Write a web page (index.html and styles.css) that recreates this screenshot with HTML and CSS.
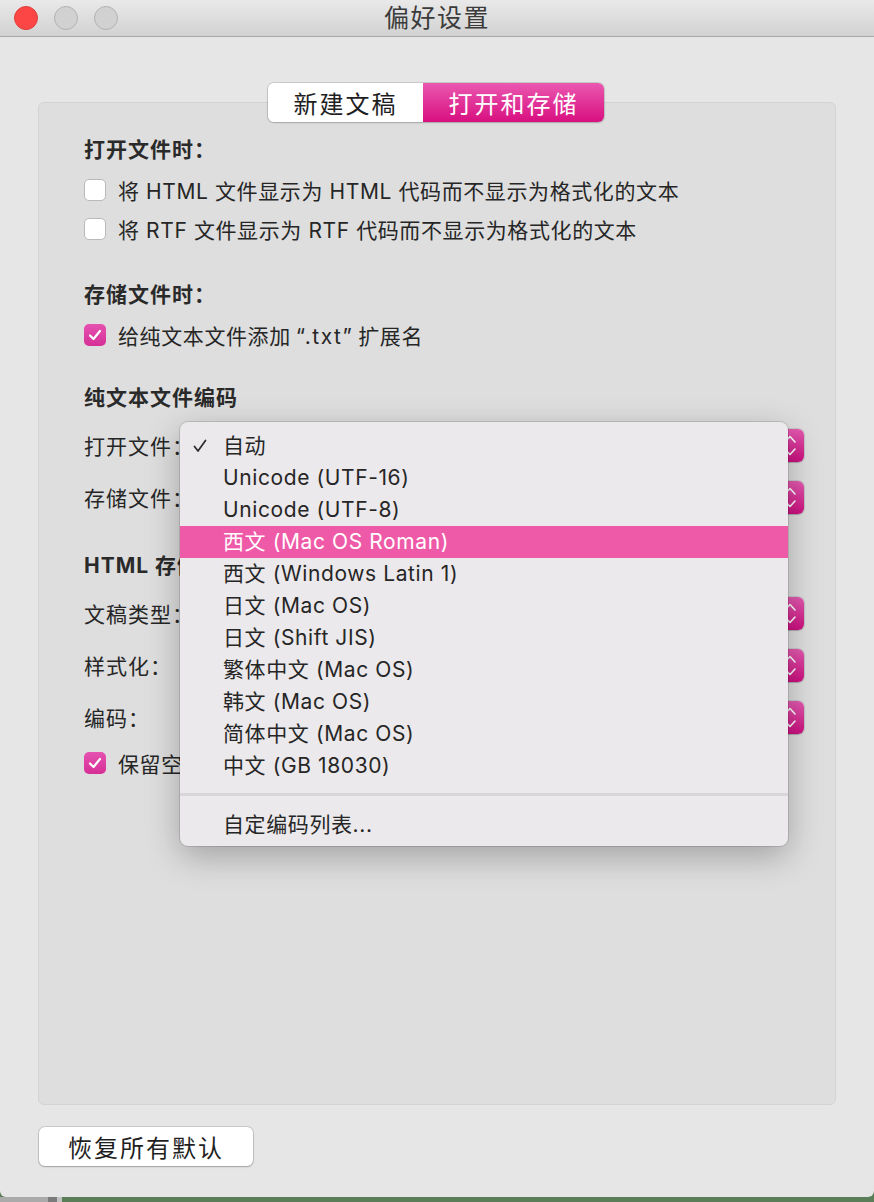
FILE: index.html
```html
<!DOCTYPE html>
<html lang="zh-CN">
<head>
<meta charset="utf-8">
<title>偏好设置</title>
<link rel="stylesheet" href="styles.css">
</head>
<body>
<div class="screen">
  <div class="window">
    <div class="titlebar">
      <div class="lights">
        <span class="light red"></span>
        <span class="light gray"></span>
        <span class="light gray"></span>
      </div>
      <div class="title">偏好设置</div>
      <div></div>
    </div>
    <div class="content">
      <div class="tabs">
        <div class="tab">新建文稿</div>
        <div class="tab active">打开和存储</div>
      </div>
      <div class="panel">
        <div class="heading">打开文件时：</div>
        <div class="group g-tight">
          <label class="check-row"><span class="box"></span><span>将 HTML 文件显示为 HTML 代码而不显示为格式化的文本</span></label>
          <label class="check-row"><span class="box"></span><span>将 RTF 文件显示为 RTF 代码而不显示为格式化的文本</span></label>
        </div>
        <div class="heading h-gap-lg">存储文件时：</div>
        <div class="group g-tight">
          <label class="check-row"><span class="box checked"><svg viewBox="0 0 22 22" width="22" height="22"><path d="M6 11.5 L9.5 15 L16 7" fill="none" stroke="#fff" stroke-width="2.2" stroke-linecap="round" stroke-linejoin="round"/></svg></span><span>给纯文本文件添加<span class="q">“.txt”</span>扩展名</span></label>
        </div>
        <div class="heading h-gap-md">纯文本文件编码</div>
        <div class="group g-pop">
          <div class="pop-row"><span class="pop-label">打开文件：</span><div class="popup"><span class="stepper"><svg viewBox="0 0 28 33" width="28" height="33"><path d="M9 13 L14 7.5 L19 13 M9 20 L14 25.5 L19 20" fill="none" stroke="#fff" stroke-width="1.6" stroke-linecap="round" stroke-linejoin="round"/></svg></span></div></div>
          <div class="pop-row"><span class="pop-label">存储文件：</span><div class="popup"><span class="stepper"><svg viewBox="0 0 28 33" width="28" height="33"><path d="M9 13 L14 7.5 L19 13 M9 20 L14 25.5 L19 20" fill="none" stroke="#fff" stroke-width="1.6" stroke-linecap="round" stroke-linejoin="round"/></svg></span></div></div>
        </div>
        <div class="heading h-gap-sm">HTML 存储选项</div>
        <div class="group g-pop">
          <div class="pop-row"><span class="pop-label">文稿类型：</span><div class="popup"><span class="stepper"><svg viewBox="0 0 28 33" width="28" height="33"><path d="M9 13 L14 7.5 L19 13 M9 20 L14 25.5 L19 20" fill="none" stroke="#fff" stroke-width="1.6" stroke-linecap="round" stroke-linejoin="round"/></svg></span></div></div>
          <div class="pop-row"><span class="pop-label">样式化：</span><div class="popup"><span class="stepper"><svg viewBox="0 0 28 33" width="28" height="33"><path d="M9 13 L14 7.5 L19 13 M9 20 L14 25.5 L19 20" fill="none" stroke="#fff" stroke-width="1.6" stroke-linecap="round" stroke-linejoin="round"/></svg></span></div></div>
          <div class="pop-row"><span class="pop-label">编码：</span><div class="popup"><span class="stepper"><svg viewBox="0 0 28 33" width="28" height="33"><path d="M9 13 L14 7.5 L19 13 M9 20 L14 25.5 L19 20" fill="none" stroke="#fff" stroke-width="1.6" stroke-linecap="round" stroke-linejoin="round"/></svg></span></div></div>
        </div>
        <div class="group g-last">
          <label class="check-row"><span class="box checked"><svg viewBox="0 0 22 22" width="22" height="22"><path d="M6 11.5 L9.5 15 L16 7" fill="none" stroke="#fff" stroke-width="2.2" stroke-linecap="round" stroke-linejoin="round"/></svg></span><span>保留空白</span></label>
        </div>
      </div>
      <div class="footer">
        <button class="btn">恢复所有默认</button>
      </div>
    </div>

    <div class="menu">
      <div class="item"><svg class="tick" viewBox="0 0 14 14" width="14" height="14"><path d="M1.5 7.5 L5 12 L12.5 1.5" fill="none" stroke="#2a2a2a" stroke-width="1.7" stroke-linecap="round" stroke-linejoin="round"/></svg>自动</div>
      <div class="item">Unicode (UTF-16)</div>
      <div class="item">Unicode (UTF-8)</div>
      <div class="item selected">西文 (Mac OS Roman)</div>
      <div class="item">西文 (Windows Latin 1)</div>
      <div class="item">日文 (Mac OS)</div>
      <div class="item">日文 (Shift JIS)</div>
      <div class="item">繁体中文 (Mac OS)</div>
      <div class="item">韩文 (Mac OS)</div>
      <div class="item">简体中文 (Mac OS)</div>
      <div class="item">中文 (GB 18030)</div>
      <div class="sep"></div>
      <div class="item">自定编码列表...</div>
    </div>
  </div>
  <div class="strip">
    <span class="s1"></span><span class="s2"></span><span class="s3"></span><span class="s4"></span>
  </div>
</div>
</body>
</html>
```

FILE: styles.css
```css
html, body {
  margin: 0;
  padding: 0;
}
body {
  width: 874px;
  height: 1202px;
  overflow: hidden;
  font-family: "Inter", "Noto Sans CJK SC", sans-serif;
  color: #262626;
  background: #5b7d57;
}
.q {
  margin: 0 5px;
  letter-spacing: 1.5px;
}
.screen {
  display: flex;
  flex-direction: column;
  height: 1202px;
}
.window {
  position: relative;
  height: 1197px;
  background: #e6e6e6;
  border-radius: 0 0 6px 6px;
  display: flex;
  flex-direction: column;
  overflow: hidden;
}
.titlebar {
  height: 36px;
  border-bottom: 1px solid #a9a9a9;
  background: linear-gradient(#e9e9e9, #d2d2d2);
  display: grid;
  grid-template-columns: 1fr auto 1fr;
  align-items: center;
}
.lights {
  display: flex;
  gap: 16px;
  padding-left: 14px;
}
.light {
  width: 22px;
  height: 22px;
  border-radius: 50%;
  border: 1px solid #b3b3b3;
  background: #d1d1d1;
}
.light.red {
  background: #fc4646;
  border-color: #df3f3b;
}
.title {
  font-size: 25px;
  letter-spacing: 1.5px;
  color: #3b3b3b;
  line-height: 36px;
}
.content {
  flex: 1;
  display: flex;
  flex-direction: column;
  padding: 46px 38px 31px 38px;
}
.tabs {
  align-self: center;
  display: flex;
  height: 39px;
  margin-bottom: -20px;
  position: relative;
  z-index: 2;
  border-radius: 6px;
  box-shadow: 0 0 0 1px rgba(0,0,0,0.12), 0 1px 2px rgba(0,0,0,0.15);
  overflow: hidden;
  transform: translateX(-1px);
}
.tab {
  display: flex;
  align-items: center;
  justify-content: center;
  font-size: 24px;
  letter-spacing: 2px;
  background: #ffffff;
  color: #1e1e1e;
  width: 155px;
}
.tab.active {
  width: 181px;
  color: #ffffff;
  background: linear-gradient(#ea58b0, #d80f80);
}
.panel {
  flex: 1;
  background: #dedede;
  border: 1px solid #d3d3d3;
  border-radius: 6px;
  padding: 34px 31px 0 45px;
  display: flex;
  flex-direction: column;
}
.heading {
  font-size: 21px;
  font-weight: 700;
  letter-spacing: 1px;
  line-height: 26px;
  color: #2a2a2a;
  white-space: nowrap;
}
.h-gap-lg { margin-top: 34px; }
.h-gap-md { margin-top: 31px; }
.h-gap-sm { margin-top: 30px; }
.group {
  display: flex;
  flex-direction: column;
}
.g-tight { margin-top: 7px; }
.g-pop { margin-top: 8px; }
.g-last { margin-top: 0; }
.check-row {
  height: 39px;
  display: flex;
  align-items: center;
  gap: 12px;
  font-size: 21px;
  letter-spacing: 0.6px;
  color: #262626;
  white-space: nowrap;
}
.box {
  width: 22px;
  height: 22px;
  box-sizing: border-box;
  border-radius: 5px;
  background: #ffffff;
  border: 1px solid #b9b9b9;
  flex: none;
  display: flex;
}
.box.checked {
  border: none;
  background: linear-gradient(#e552b0, #d62f96);
}
.pop-row {
  height: 52px;
  display: flex;
  align-items: center;
}
.pop-label {
  width: 106px;
  flex: none;
  font-size: 21px;
  letter-spacing: 1px;
  color: #262626;
  white-space: nowrap;
}
.popup {
  flex: 1;
  height: 33px;
  border-radius: 6px;
  background: #ffffff;
  box-shadow: 0 0 0 1px rgba(0,0,0,0.1), 0 1px 1px rgba(0,0,0,0.15);
  display: flex;
  align-items: center;
  justify-content: flex-end;
}
.stepper {
  width: 28px;
  height: 33px;
  border-radius: 6px;
  background: linear-gradient(#e45ab0, #cd0f80);
  display: flex;
}
.footer {
  margin-top: 22px;
  display: flex;
}
.btn {
  width: 214px;
  height: 39px;
  margin-left: 1px;
  border: none;
  border-radius: 6px;
  background: #ffffff;
  box-shadow: 0 0 0 1px rgba(0,0,0,0.12), 0 1px 2px rgba(0,0,0,0.2);
  font-family: "Inter", "Noto Sans CJK SC", sans-serif;
  font-size: 24px;
  letter-spacing: 2px;
  color: #1f1f1f;
  padding: 0;
}
.menu {
  position: absolute;
  left: 180px;
  top: 422px;
  width: 608px;
  height: 424px;
  box-sizing: border-box;
  padding-top: 8px;
  border-radius: 8px;
  background: #ebe9eb;
  box-shadow: 0 0 0 1px rgba(0,0,0,0.12), 0 10px 34px rgba(0,0,0,0.28);
  z-index: 5;
}
.item {
  position: relative;
  height: 32px;
  line-height: 32px;
  padding-left: 43px;
  font-size: 21px;
  letter-spacing: 0.6px;
  color: #262626;
  white-space: nowrap;
}
.item.selected {
  background: #ef5aa8;
  color: #ffffff;
}
.tick {
  position: absolute;
  left: 13px;
  top: 9px;
}
.sep {
  height: 3px;
  margin: 11px 0 13px;
  background: #d8d6d8;
}
.strip {
  flex: 1;
  display: flex;
}
.strip .s1 { width: 48px; background: #aaaaaa; }
.strip .s2 { width: 9px; background: #7b7b7b; }
.strip .s3 { width: 5px; background: #c2c2c2; }
.strip .s4 { flex: 1; background: #5b7d57; }
```
